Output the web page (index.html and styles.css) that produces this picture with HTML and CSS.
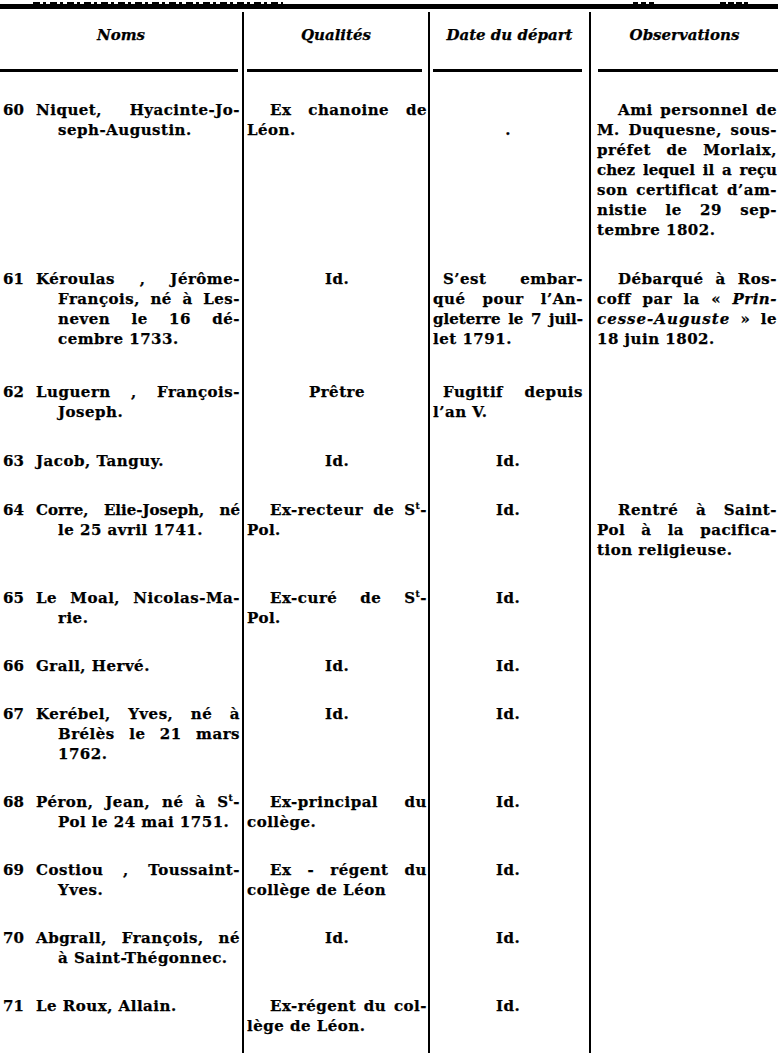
FILE: index.html
```html
<!DOCTYPE html>
<html lang="fr">
<head>
<meta charset="utf-8">
<title>Tableau</title>
<link rel="stylesheet" href="styles.css">
</head>
<body>
<div class="page">
  <div class="scrap"></div>
  <div class="toprule"></div>
  <div class="table">
    <div class="h h1"><span class="ht">Noms</span><span class="hr"></span></div>
    <div class="h h2 c2"><span class="ht">Qualités</span><span class="hr"></span></div>
    <div class="h h3 c3"><span class="ht">Date du départ</span><span class="hr"></span></div>
    <div class="h h4 c4"><span class="ht">Observations</span><span class="hr"></span></div>

    <!-- 60 -->
    <div class="d c1 first"><span class="num">60</span><div class="nm"><span class="ln j">Niquet, Hyacinte-Jo-</span><span class="ln k">seph-Augustin.</span></div></div>
    <div class="d c2 first"><span class="ln j i2">Ex chanoine de</span><span class="ln">Léon.</span></div>
    <div class="d c3 first"><span class="ln">&nbsp;</span><span class="ln ctr">.</span></div>
    <div class="d c4 first"><span class="ln j i4">Ami personnel de</span><span class="ln j">M. Duquesne, sous-</span><span class="ln j">préfet de Morlaix,</span><span class="ln j tight">chez lequel il a reçu</span><span class="ln j">son certificat d’am-</span><span class="ln j">nistie le 29 sep-</span><span class="ln">tembre 1802.</span></div>

    <!-- 61 -->
    <div class="d loose c1"><span class="num">61</span><div class="nm"><span class="ln j">Kéroulas , Jérôme-</span><span class="ln j k">François, né à Les-</span><span class="ln j k">neven le 16 dé-</span><span class="ln k">cembre 1733.</span></div></div>
    <div class="d loose c2"><span class="ln ctr">Id.</span></div>
    <div class="d loose c3"><span class="ln j i3">S’est embar-</span><span class="ln j">qué pour l’An-</span><span class="ln j tight">gleterre le 7 juil-</span><span class="ln">let 1791.</span></div>
    <div class="d loose c4"><span class="ln j i4">Débarqué à Ros-</span><span class="ln j">coff par la « <i class="it">Prin-</i></span><span class="ln j"><i class="it sp">cesse-Auguste</i> » le</span><span class="ln">18 juin 1802.</span></div>

    <!-- 62 -->
    <div class="d c1"><span class="num">62</span><div class="nm"><span class="ln j">Luguern , François-</span><span class="ln k">Joseph.</span></div></div>
    <div class="d c2"><span class="ln ctr">Prêtre</span></div>
    <div class="d c3"><span class="ln j i3">Fugitif depuis</span><span class="ln">l’an V.</span></div>
    <div class="d c4"></div>

    <!-- 63 -->
    <div class="d c1"><span class="num">63</span><div class="nm"><span class="ln">Jacob, Tanguy.</span></div></div>
    <div class="d c2"><span class="ln ctr">Id.</span></div>
    <div class="d c3"><span class="ln ctr">Id.</span></div>
    <div class="d c4"></div>

    <!-- 64 -->
    <div class="d snug c1"><span class="num">64</span><div class="nm"><span class="ln j tight">Corre, Elie-Joseph, né</span><span class="ln k">le 25 avril 1741.</span></div></div>
    <div class="d snug c2"><span class="ln j i2">Ex-recteur de S<span class="sup">t</span>-</span><span class="ln">Pol.</span></div>
    <div class="d snug c3"><span class="ln ctr">Id.</span></div>
    <div class="d snug c4"><span class="ln j i4">Rentré à Saint-</span><span class="ln j">Pol à la pacifica-</span><span class="ln">tion religieuse.</span></div>

    <!-- 65 -->
    <div class="d snug c1"><span class="num">65</span><div class="nm"><span class="ln j">Le Moal, Nicolas-Ma-</span><span class="ln k">rie.</span></div></div>
    <div class="d snug c2"><span class="ln j i2">Ex-curé de S<span class="sup">t</span>-</span><span class="ln">Pol.</span></div>
    <div class="d snug c3"><span class="ln ctr">Id.</span></div>
    <div class="d snug c4"></div>

    <!-- 66 -->
    <div class="d snug c1"><span class="num">66</span><div class="nm"><span class="ln">Grall, Hervé.</span></div></div>
    <div class="d snug c2"><span class="ln ctr">Id.</span></div>
    <div class="d snug c3"><span class="ln ctr">Id.</span></div>
    <div class="d snug c4"></div>

    <!-- 67 -->
    <div class="d snug c1"><span class="num">67</span><div class="nm"><span class="ln j">Kerébel, Yves, né à</span><span class="ln j k">Brélès le 21 mars</span><span class="ln k">1762.</span></div></div>
    <div class="d snug c2"><span class="ln ctr">Id.</span></div>
    <div class="d snug c3"><span class="ln ctr">Id.</span></div>
    <div class="d snug c4"></div>

    <!-- 68 -->
    <div class="d snug c1"><span class="num">68</span><div class="nm"><span class="ln j">Péron, Jean, né à S<span class="sup">t</span>-</span><span class="ln k">Pol le 24 mai 1751.</span></div></div>
    <div class="d snug c2"><span class="ln j i2">Ex-principal du</span><span class="ln">collège.</span></div>
    <div class="d snug c3"><span class="ln ctr">Id.</span></div>
    <div class="d snug c4"></div>

    <!-- 69 -->
    <div class="d snug c1"><span class="num">69</span><div class="nm"><span class="ln j">Costiou , Toussaint-</span><span class="ln k">Yves.</span></div></div>
    <div class="d snug c2"><span class="ln j i2">Ex - régent du</span><span class="ln">collège de Léon</span></div>
    <div class="d snug c3"><span class="ln ctr">Id.</span></div>
    <div class="d snug c4"></div>

    <!-- 70 -->
    <div class="d snug c1"><span class="num">70</span><div class="nm"><span class="ln j">Abgrall, François, né</span><span class="ln k">à Saint-Thégonnec.</span></div></div>
    <div class="d snug c2"><span class="ln ctr">Id.</span></div>
    <div class="d snug c3"><span class="ln ctr">Id.</span></div>
    <div class="d snug c4"></div>

    <!-- 71 -->
    <div class="d c1"><span class="num">71</span><div class="nm"><span class="ln">Le Roux, Allain.</span></div></div>
    <div class="d c2"><span class="ln j i2">Ex-régent du col-</span><span class="ln">lège de Léon.</span></div>
    <div class="d c3"><span class="ln ctr">Id.</span></div>
    <div class="d c4"></div>

    <!-- filler to page bottom -->
    <div class="fill"></div>
    <div class="fill c2"></div>
    <div class="fill c3"></div>
    <div class="fill c4"></div>
  </div>
</div>
</body>
</html>
```

FILE: styles.css
```css
html, body {
  margin: 0;
  padding: 0;
  background: #ffffff;
}

.page {
  width: 778px;
  height: 1053px;
  overflow: hidden;
  background: #ffffff;
  color: #000000;
  font-family: "DejaVu Serif", "Liberation Serif", serif;
  font-weight: bold;
  font-size: 15px;
  line-height: 20px;
  -webkit-text-stroke: 0.25px #000;
}

/* bottom edge of the cut-off line above the table */
.scrap {
  height: 4px;
  background:
    repeating-linear-gradient(90deg, #000 0 7px, transparent 7px 10px, #000 10px 13px, transparent 13px 17px) 33px 2px / 250px 2px no-repeat,
    repeating-linear-gradient(90deg, #000 0 5px, transparent 5px 8px) 633px 2px / 22px 2px no-repeat,
    repeating-linear-gradient(90deg, #000 0 6px, transparent 6px 8px) 720px 2px / 28px 2px no-repeat;
}

.toprule {
  height: 5px;
  background: #000;
  margin-bottom: 3px;
}

.table {
  display: grid;
  grid-template-columns: 242px 186px 161px 189px;
  grid-template-rows: repeat(13, auto) 1fr;
  height: 1041px;
}

.c2, .c3, .c4 {
  border-left: 2px solid #000;
}

/* header */
.h {
  display: flex;
  flex-direction: column;
  padding-top: 13px;
}

.ht {
  display: block;
  text-align: center;
  font-style: italic;
  line-height: 20px;
}

.hr {
  display: block;
  height: 3px;
  background: #000;
  margin-top: 24px;
}

.h1 .hr { margin-right: 4px; }
.h2 .hr { margin-left: 3px; margin-right: 6px; }
.h3 .hr { margin-left: 3px; margin-right: 7px; }
.h4 .hr { margin-left: 7px; }

/* data cells */
.d {
  padding-bottom: 29px;
}

.first {
  padding-top: 28px;
}

.loose {
  padding-bottom: 33px;
}

.snug {
  padding-bottom: 28px;
}

.c1.d {
  display: flex;
  padding-left: 3px;
  padding-right: 2px;
}

.num {
  flex: none;
  width: 33px;
}

.nm {
  flex: 1;
  min-width: 0;
}

.c2.d { padding-left: 3px; padding-right: 1px; }
.c3.d { padding-left: 3px; padding-right: 6px; }
.c4.d { padding-left: 6px; padding-right: 1px; }

.ln {
  display: block;
  white-space: nowrap;
  letter-spacing: 0.5px;
}

.j {
  text-align: justify;
  text-align-last: justify;
}

.tight { letter-spacing: 0; }

.k { padding-left: 22px; }
.i2 { padding-left: 23px; }
.i3 { padding-left: 10px; }
.i4 { padding-left: 21px; }

.ctr { text-align: center; }

.it { font-style: italic; }
.sp { letter-spacing: 1px; }

.sup {
  font-size: 9px;
  line-height: 0;
  vertical-align: 6px;
}
```
